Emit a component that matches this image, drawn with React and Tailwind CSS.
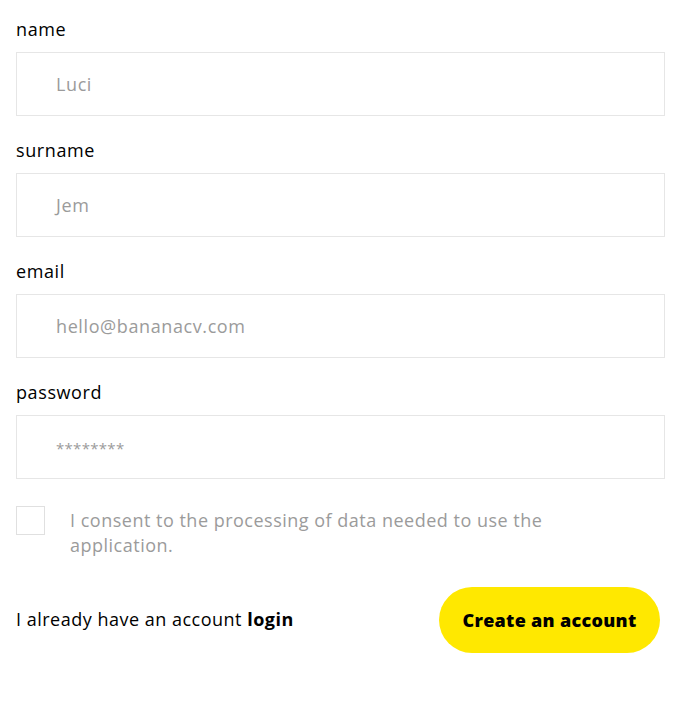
import React from "react";

function Field({ label, value, small }) {
  return (
    <div className="flex flex-col">
      <label className="text-[18px] leading-[26px] tracking-[0.6px] text-black h-[26px] mb-[10px]">{label}</label>
      <div className="h-[64px] border border-[#e6e6e6] flex items-center pl-[39px] text-[18px] tracking-[0.6px] text-[#9b9b9b]">
        {small ? (
          <span className="text-[15px] tracking-[0.3px] pt-[3px]">{value}</span>
        ) : (
          value
        )}
      </div>
    </div>
  );
}

export default function App() {
  return (
    <div className="w-[681px] h-[724px] bg-white px-4 pt-4 font-['Open_Sans',sans-serif]">
      <div className="flex flex-col gap-[21px]">
        <Field label="name" value="Luci" />
        <Field label="surname" value="Jem" />
        <Field label="email" value="hello@bananacv.com" />
        <Field label="password" value="********" small />
      </div>
      <div className="flex items-start mt-[27px]">
        <div className="w-[29px] h-[29px] border border-[#e0e0e0] shrink-0" />
        <p className="ml-[25px] text-[18px] leading-[25px] tracking-[0.5px] text-[#9b9b9b] w-[520px] mt-[2px]">
          I consent to the processing of data needed to use the application.
        </p>
      </div>
      <div className="flex items-center justify-between mt-[29px] pr-[5px]">
        <p className="text-[18px] tracking-[0.5px] text-black -mt-[2px]">
          I already have an account <span className="font-bold">login</span>
        </p>
        <button className="w-[221px] h-[66px] rounded-full bg-[#ffe800] text-[18px] tracking-[0.3px] font-extrabold text-black">
          Create an account
        </button>
      </div>
    </div>
  );
}
